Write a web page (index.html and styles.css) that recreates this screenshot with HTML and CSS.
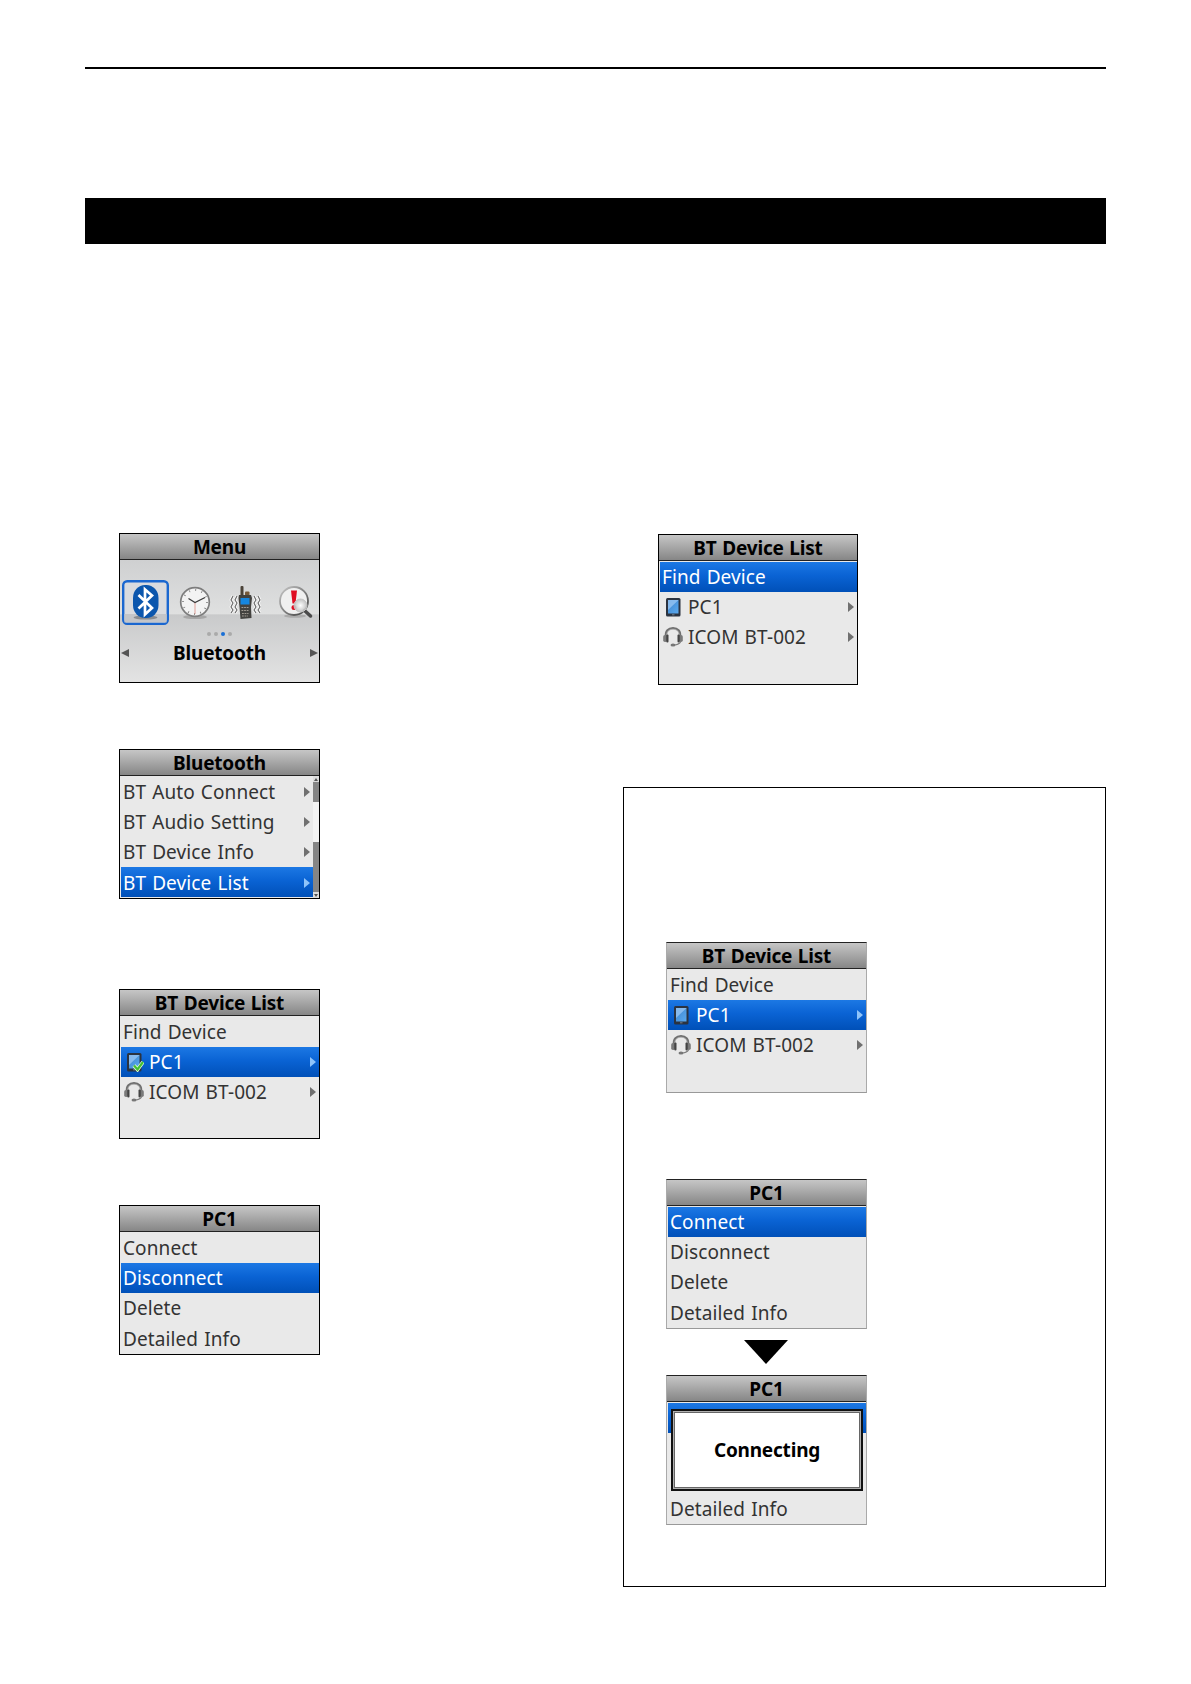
FILE: index.html
```html
<!DOCTYPE html>
<html lang="en">
<head>
    <meta charset="UTF-8">
    <meta name="viewport" content="width=device-width, initial-scale=1.0">
    <title>Bluetooth</title>
    <link rel="stylesheet" href="styles.css">
</head>
<body>
    <!-- Shared icons -->
    <svg class="defs" width="0" height="0">
        <defs>
            <linearGradient id="glass" x1="0" y1="0" x2="1" y2="1">
                <stop offset="0" stop-color="#3f86cf"/>
                <stop offset="1" stop-color="#5aa9ee"/>
            </linearGradient>
            <linearGradient id="silver" x1="0" y1="0" x2="1" y2="1">
                <stop offset="0" stop-color="#c9c9c9"/>
                <stop offset="1" stop-color="#3c3c3c"/>
            </linearGradient>
            <radialGradient id="lens">
                <stop offset="0" stop-color="#ffffff"/>
                <stop offset="1" stop-color="#bdbdbd"/>
            </radialGradient>
        </defs>
        <symbol id="tablet" viewBox="0 0 20 20">
            <rect x="3" y="1" width="14.5" height="18.5" rx="1.5" fill="#2b3340"/>
            <rect x="5" y="3" width="10.5" height="13.5" fill="url(#glass)"/>
            <path d="M5 3h10.5L5 13z" fill="#9cc8f4" opacity=".75"/>
            <rect x="9" y="17.3" width="2.5" height="1" fill="#76808c"/>
        </symbol>
        <symbol id="headset" viewBox="0 0 20 20">
            <path d="M3 10C2 4 5.500 1.200 10 1.200s8 2.800 7 8.800" fill="none" stroke="#707070" stroke-width="2.200"/>
            <path d="M3.600 8.500C4 4 6.500 2.300 10 2.300s6 1.700 6.400 6.200" fill="none" stroke="#b5b5b5" stroke-width=".8"/>
            <rect x=".2" y="8" width="4" height="7" rx="1.800" fill="#7a7a7a"/>
            <rect x="3.300" y="7.500" width="2.200" height="8" rx="1" fill="#444"/>
            <rect x="15.800" y="8" width="4" height="7" rx="1.800" fill="#7a7a7a"/>
            <rect x="14.500" y="7.500" width="2.200" height="8" rx="1" fill="#444"/>
            <path d="M17.500 15c-1 2-3 2.800-6.500 3" fill="none" stroke="#777" stroke-width="1.200"/>
            <ellipse cx="10" cy="18.100" rx="2.500" ry="1.500" fill="#777"/>
        </symbol>
    </svg>

    <div class="page">
        <div class="rule"></div>
        <div class="banner"></div>

        <div class="columns">
            <div class="left">
                <!-- Main menu -->
                <div class="screen menu">
                    <div class="title">Menu</div>
                    <div class="menu-body">
                        <div class="icons">
                            <svg class="ic-bt" width="47" height="45" viewBox="0 0 47 45">
                                <rect x="1.200" y="1.200" width="44.600" height="42.600" rx="4" fill="#d9dbdf" stroke="#1a67d0" stroke-width="2.400"/>
                                <rect x="2.400" y="34" width="42.200" height="8.500" fill="#c3c5c9"/>
                                <ellipse cx="23.500" cy="37.500" rx="12" ry="2" fill="#888b90"/>
                                <rect x="11" y="5" width="25.500" height="33" rx="12" ry="13" fill="#0b56ad"/>
                                <path d="M16.500 15l13.500 13-7 6.500V9.500l7 6-13.500 13" fill="none" stroke="#fff" stroke-width="2.700"/>
                            </svg>
                            <svg class="ic-clock" width="32" height="34" viewBox="0 0 32 34">
                                <ellipse cx="16" cy="31" rx="12" ry="2" fill="#a6a6a6"/>
                                <circle cx="16" cy="16" r="14.300" fill="#f3f3f3" stroke="#7d7d7d" stroke-width="1.700"/>
                                <circle cx="16" cy="16" r="12" fill="none" stroke="#777" stroke-width="2" stroke-dasharray=".8 5.483"/>
                                <path d="M16 16v12" stroke="#d98a80" stroke-width=".8"/>
                                <path d="M9.500 12.500l6.500 4 10-5" fill="none" stroke="#3a3a3a" stroke-width="1.200"/>
                            </svg>
                            <svg class="ic-radio" width="32" height="34" viewBox="0 0 32 34">
                                <path d="M4 10l-2 4 2 3-2 4 2 3-2 3M8 10l-2 4 2 3-2 4 2 3-2 3M25 10l2 4-2 3 2 4-2 3 2 3M29 10l2 4-2 3 2 4-2 3 2 3" fill="none" stroke="#fafafa" stroke-width="2.800"/>
                                <path d="M4 10l-2 4 2 3-2 4 2 3-2 3M8 10l-2 4 2 3-2 4 2 3-2 3M25 10l2 4-2 3 2 4-2 3 2 3M29 10l2 4-2 3 2 4-2 3 2 3" fill="none" stroke="#666" stroke-width="1.100"/>
                                <rect x="11.500" y="0" width="3" height="11" rx="1" fill="#4a4238"/>
                                <rect x="16" y="5.500" width="4.500" height="4" rx="1" fill="#75593a"/>
                                <path d="M10 9h12l1 3-1 9 .5 11-11 1-1-12-1-9z" fill="#43423f"/>
                                <rect x="11.500" y="12" width="9" height="6.500" fill="#1686df"/>
                                <path d="M12.500 21.500h7M12.500 24.500h7M13 27.500h6.500M13 30h6" stroke="#a29c93" stroke-width="1.200" stroke-dasharray="1.800 .8"/>
                            </svg>
                            <svg class="ic-find" width="34" height="34" viewBox="0 0 34 34">
                                <ellipse cx="16" cy="30" rx="11" ry="1.800" fill="#ababab"/>
                                <circle cx="15" cy="15" r="14" fill="#f0f0f0" stroke="url(#silver)" stroke-width="1.800"/>
                                <path d="M12 4.500h6l-1.500 13h-3z" fill="#df0d22"/>
                                <circle cx="15" cy="21.500" r="2.500" fill="#df0d22"/>
                                <path d="M25.500 24.500l6 5.500" stroke="#4b4b4b" stroke-width="3.500" stroke-linecap="round"/>
                                <circle cx="21.500" cy="19.500" r="6.500" fill="url(#lens)" fill-opacity=".9" stroke="#c6c6c6"/>
                            </svg>
                        </div>
                        <div class="dots"><i></i><i></i><i class="on"></i><i></i></div>
                        <div class="picker">
                            <span class="arrow back"></span>
                            <span class="name">Bluetooth</span>
                            <span class="arrow"></span>
                        </div>
                    </div>
                </div>

                <!-- Bluetooth menu -->
                <div class="screen bluetooth">
                    <div class="title">Bluetooth</div>
                    <div class="scroll-body">
                        <div class="list">
                            <div class="row">BT Auto Connect<span class="arrow"></span></div>
                            <div class="row">BT Audio Setting<span class="arrow"></span></div>
                            <div class="row">BT Device Info<span class="arrow"></span></div>
                            <div class="row selected">BT Device List<span class="arrow"></span></div>
                        </div>
                        <div class="scrollbar">
                            <span class="up"></span>
                            <span class="thumb"></span>
                            <span class="down"></span>
                        </div>
                    </div>
                </div>

                <!-- Device list, PC1 connected -->
                <div class="screen connected">
                    <div class="title">BT Device List</div>
                    <div class="list">
                        <div class="row">Find Device</div>
                        <div class="row selected device">
                            <svg class="icon" viewBox="0 0 20 20">
                                <use href="#tablet"/>
                                <path d="M10 13.500l3.500 4 5.500-7.500" fill="none" stroke="#e9ffe0" stroke-width="3.800"/>
                                <path d="M10 13.500l3.500 4 5.500-7.500" fill="none" stroke="#43bf32" stroke-width="2.300"/>
                            </svg>PC1<span class="arrow"></span>
                        </div>
                        <div class="row device"><svg class="icon"><use href="#headset"/></svg>ICOM BT-002<span class="arrow"></span></div>
                    </div>
                </div>

                <div class="screen disconnect">
                    <div class="title">PC1</div>
                    <div class="list">
                        <div class="row">Connect</div>
                        <div class="row selected">Disconnect</div>
                        <div class="row">Delete</div>
                        <div class="row">Detailed Info</div>
                    </div>
                </div>
            </div>

            <div class="right">
                <div class="screen find">
                    <div class="title">BT Device List</div>
                    <div class="list">
                        <div class="row selected">Find Device</div>
                        <div class="row device"><svg class="icon"><use href="#tablet"/></svg>PC1<span class="arrow"></span></div>
                        <div class="row device"><svg class="icon"><use href="#headset"/></svg>ICOM BT-002<span class="arrow"></span></div>
                    </div>
                </div>

                <!-- Reconnecting -->
                <div class="box">
                    <div class="screen light tall">
                        <div class="title">BT Device List</div>
                        <div class="list">
                            <div class="row">Find Device</div>
                            <div class="row selected device"><svg class="icon"><use href="#tablet"/></svg>PC1<span class="arrow"></span></div>
                            <div class="row device"><svg class="icon"><use href="#headset"/></svg>ICOM BT-002<span class="arrow"></span></div>
                        </div>
                    </div>

                    <div class="screen light connect">
                        <div class="title">PC1</div>
                        <div class="list">
                            <div class="row selected">Connect</div>
                            <div class="row">Disconnect</div>
                            <div class="row">Delete</div>
                            <div class="row">Detailed Info</div>
                        </div>
                    </div>

                    <div class="next"></div>

                    <div class="screen light">
                        <div class="title">PC1</div>
                        <div class="list">
                            <div class="row selected"></div>
                            <div class="row"></div>
                            <div class="row"></div>
                            <div class="row">Detailed Info</div>
                        </div>
                        <div class="popup">Connecting</div>
                    </div>
                </div>
            </div>
        </div>
    </div>
</body>
</html>
```
FILE: styles.css
```css
* {
    box-sizing: border-box;
}

body {
    margin: 0;
    background-color: #fff;
    font-family: "Noto Sans", "Open Sans", sans-serif;
}

.defs {
    position: absolute;
}

.page {
    width: 1191px;
    height: 1684px;
    padding: 67px 85px 0;
}

.rule {
    height: 2px;
    background-color: #000;
}

.banner {
    height: 46px;
    margin-top: 129px;
    background-color: #000;
}

.columns {
    display: flex;
    justify-content: space-between;
    padding-top: 289px;
}

.left {
    padding-left: 34px;
}

.right {
    width: 483px;
    padding-top: 1px;
}

/* Radio display */
.screen {
    position: relative;
    width: 201px;
    height: 150px;
    border: 1px solid #000;
    background-color: #e9e9e9;
    color: #333;
    font-size: 19px;
    letter-spacing: 0.1px;
    word-spacing: 1px;
}

.screen.light {
    border-color: #222 #aaa #999 #aaa;
}

.screen.tall {
    height: 151px;
}

.bluetooth {
    margin-top: 66px;
}

.connected {
    margin-top: 90px;
}

.disconnect {
    margin-top: 66px;
}

.find {
    width: 200px;
    height: 151px;
    margin-left: 35px;
}

.title {
    height: 26px;
    border-bottom: 1px solid #222;
    background: linear-gradient(#c6c6c6, #868686);
    color: #000;
    font-weight: bold;
    line-height: 27px;
    text-align: center;
    letter-spacing: -0.2px;
}

.list {
    flex: 1;
    padding-top: 1px;
}

.row {
    display: flex;
    align-items: center;
    height: 30px;
    padding: 0 3px;
    line-height: 28px;
    white-space: nowrap;
}

.row.selected {
    margin-left: 1px;
    padding-left: 2px;
    background: linear-gradient(#1c78e4, #0a63d4 45%, #0050b8);
    color: #fff;
}

/* Bottom row sits a little lower */
.row:nth-child(4) {
    padding-top: 1px;
}

.icon {
    width: 20px;
    height: 20px;
    margin: 0 5px 0 1px;
}

.arrow {
    margin-left: auto;
    border: 5px solid transparent;
    border-left: 6px solid #707070;
    border-right: 0;
}

.selected .arrow {
    border-left-color: #8fc4fa;
}

/* Menu screen */
.menu-body {
    height: 122px;
    padding-top: 20px;
    background: linear-gradient(#cfd0d1, #dfe0e0 44%, #c9cacb 45%, #e3e3e3 100%);
}

.icons {
    display: flex;
    height: 45px;
    padding-left: 2px;
}

.ic-clock {
    margin: 6px 0 0 10px;
}

.ic-radio {
    margin: 6px 0 0 18px;
}

.ic-find {
    margin: 6px 0 0 18px;
}

.dots {
    display: flex;
    justify-content: center;
    gap: 3px;
    margin-top: 7px;
}

.dots i {
    width: 4px;
    height: 4px;
    border-radius: 50%;
    background-color: #aaa;
}

.dots .on {
    background-color: #1a6fd6;
}

.picker {
    display: flex;
    align-items: center;
    justify-content: space-between;
    height: 30px;
    padding: 0 1px;
    margin-top: 2px;
    color: #000;
    font-weight: bold;
    letter-spacing: -0.2px;
}

.picker .arrow {
    margin: 0;
    border-width: 4px 0 4px 8px;
    border-left-color: #555;
}

.picker .back {
    transform: scaleX(-1);
}

/* Scrolling list */
.scroll-body {
    display: flex;
}

.scrollbar {
    display: flex;
    flex-direction: column;
    justify-content: space-between;
    width: 6px;
    height: 122px;
    background-color: #858585;
}

.up,
.down {
    display: flex;
    align-items: center;
    justify-content: center;
    width: 6px;
    height: 6px;
    background-color: #ddd;
}

.up::after,
.down::after {
    content: "";
    border: 2px solid transparent;
    border-top: 0;
    border-bottom: 3px solid #555;
}

.down::after {
    transform: scaleY(-1);
}

.thumb {
    width: 6px;
    height: 40px;
    margin-bottom: 31px;
    background-color: #f3f3f3;
}

/* Boxed procedure */
.box {
    height: 800px;
    margin-top: 102px;
    padding: 154px 0 0 42px;
    border: 1px solid #000;
}

.connect {
    margin-top: 86px;
}

.next {
    width: 44px;
    height: 24px;
    margin: 11px 0 11px 78px;
    background-color: #000;
    clip-path: polygon(0 0, 100% 0, 50% 100%);
}

.popup {
    position: absolute;
    left: 4px;
    top: 33px;
    width: 192px;
    height: 82px;
    border: 2px solid #111;
    background-color: #fff;
    box-shadow: inset 0 0 0 1px #b0b0b0, inset 0 0 0 2px #666;
    color: #000;
    font-weight: bold;
    line-height: 78px;
    text-align: center;
    letter-spacing: -0.2px;
}
```
